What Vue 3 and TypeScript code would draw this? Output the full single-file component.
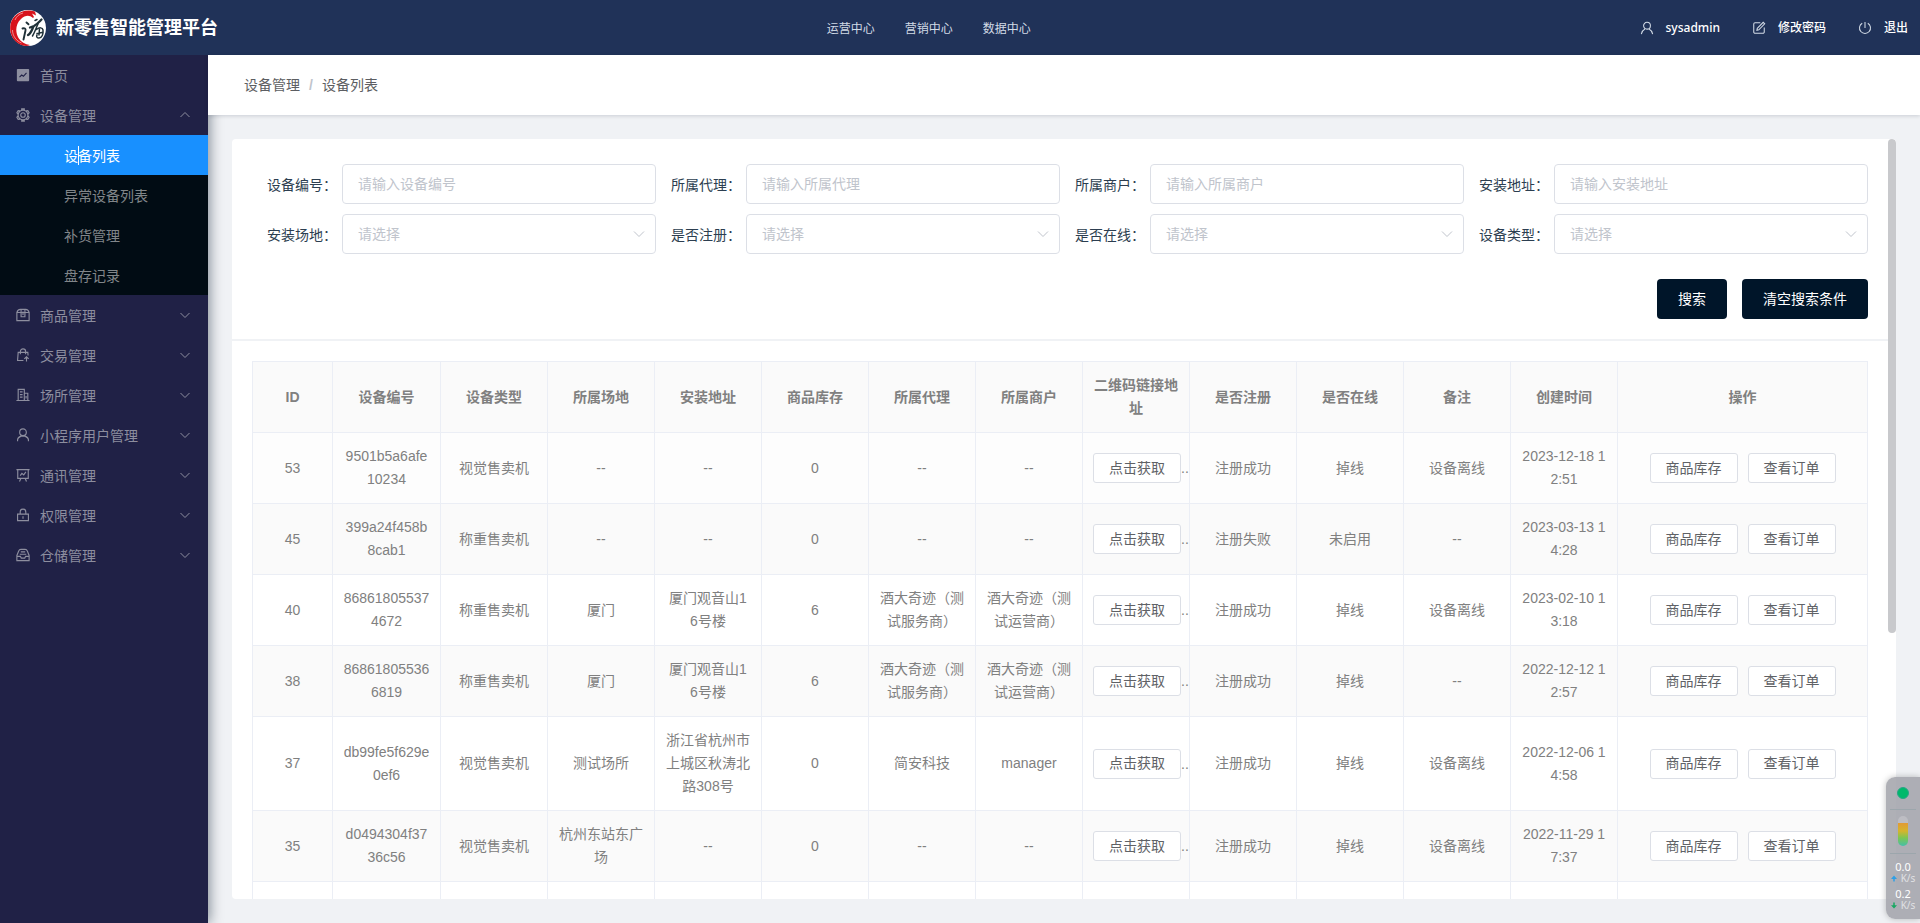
<script setup lang="ts">
import { ref } from 'vue'

interface MenuItem {
  label: string
  icon: string
  children?: string[]
}

interface Field {
  id: string
  label: string
  placeholder: string
  select?: boolean
}

const icons: Record<string, string> = {
  gear: 'M8 2.400a5.600 5.600 0 1 0 0 11.200A5.600 5.600 0 0 0 8 2.400zM8 5.400a2.600 2.600 0 1 0 0 5.200 2.600 2.600 0 0 0 0-5.200zM6.500 2.400V1h3v1.400M6.500 13.600V15h3v-1.400M2.200 7 1 5.500 2.500 3l2 .3M13.800 7 15 5.500 13.500 3l-2 .3M2.200 9 1 10.500 2.500 13l2-.3M13.800 9l1.200 1.500-1.500 2.500-2-.3',
  goods: 'M1 5.200h14v9.300H1zM1 5.200C1.500 3 3 1.500 5 1.500h6c2 0 3.500 1.500 4 3.700M5.800 1.500V10h4.400V1.500M8 4v4',
  sell: 'M8.500 14.300H1.800L2.500 5h11l.3 3.500M5 7V4a3 3 0 0 1 6 0v3M12 15.500V10.500M9.500 12.500 12 10l2.500 2.500',
  building: 'M2.500 14V1.500h7V14M9.500 6h4v8M.5 14.300h15M4.500 4.500h3M4.500 7.500h3M4.500 10.500h3M11.500 9v3',
  user: 'M8 1a3.800 3.800 0 1 0 0 7.600A3.800 3.800 0 0 0 8 1zM1.800 15v-1.500c0-1.700 1.700-3.300 4-4.200h4.400c2.300.9 4 2.500 4 4.200V15',
  board: 'M.5 1.800h15M2 1.800v10h12v-10M5.500 12 4 15.500M10.500 12l1.500 3.500M4.800 8.800l2-2.600 2 1.600 2.500-3.300',
  lock: 'M1.800 7h12.400v7.500H1.800zM4.800 7V4.500a3.200 3.200 0 0 1 6.400 0V7M8 9.500v2.800',
  storage: 'M1 8.500 3.200 3.200C3.600 2 4.300 1.500 5.500 1.500h5c1.200 0 1.900.5 2.300 1.700L15 8.500v6H1zM1 9.500h4l1 2h4l1-2h4M5.500 4.500h5M4.300 7.200h7.400',
  edit: 'M9.500 2H3.500A1.500 1.500 0 0 0 2 3.500v9A1.500 1.500 0 0 0 3.500 14h9a1.500 1.500 0 0 0 1.500-1.500v-5M6 8.500 12.800 1.500l1.700 1.700L7.800 10l-2.200.5z',
  power: 'M8 1v7M4.800 2.500a6.300 6.300 0 1 0 6.400 0',
  person: 'M8 1.500a3.900 3.900 0 1 0 0 7.800 3.900 3.900 0 0 0 0-7.800zM1.500 15c.8-3 2.200-4.800 4.200-5.800M14.500 15c-.8-3-2.200-4.800-4.200-5.800',
}

const menu: MenuItem[] = [
  { label: '首页', icon: 'home' },
  { label: '设备管理', icon: 'gear', children: ['设备列表', '异常设备列表', '补货管理', '盘存记录'] },
  { label: '商品管理', icon: 'goods' },
  { label: '交易管理', icon: 'sell' },
  { label: '场所管理', icon: 'building' },
  { label: '小程序用户管理', icon: 'user' },
  { label: '通讯管理', icon: 'board' },
  { label: '权限管理', icon: 'lock' },
  { label: '仓储管理', icon: 'storage' },
]

const activeChild = ref('设备列表')

const fields: Field[] = [
  { id: 'code', label: '设备编号', placeholder: '请输入设备编号' },
  { id: 'agent', label: '所属代理', placeholder: '请输入所属代理' },
  { id: 'merchant', label: '所属商户', placeholder: '请输入所属商户' },
  { id: 'address', label: '安装地址', placeholder: '请输入安装地址' },
  { id: 'site', label: '安装场地', placeholder: '请选择', select: true },
  { id: 'registered', label: '是否注册', placeholder: '请选择', select: true },
  { id: 'online', label: '是否在线', placeholder: '请选择', select: true },
  { id: 'type', label: '设备类型', placeholder: '请选择', select: true },
]

const form = ref<Record<string, string>>(Object.fromEntries(fields.map((f) => [f.id, ''])))

function clearForm(): void {
  for (const f of fields) form.value[f.id] = ''
}

const columns: string[] = [
  'ID', '设备编号', '设备类型', '所属场地', '安装地址', '商品库存', '所属代理', '所属商户',
  '二维码链接地址', '是否注册', '是否在线', '备注', '创建时间', '操作',
]

/* Cells before the QR-code column, then the cells after it. */
const rows: { before: string[]; after: string[] }[] = [
  { before: ['53', '9501b5a6afe10234', '视觉售卖机', '--', '--', '0', '--', '--'], after: ['注册成功', '掉线', '设备离线', '2023-12-18 12:51'] },
  { before: ['45', '399a24f458b8cab1', '称重售卖机', '--', '--', '0', '--', '--'], after: ['注册失败', '未启用', '--', '2023-03-13 14:28'] },
  { before: ['40', '868618055374672', '称重售卖机', '厦门', '厦门观音山1\n6号楼', '6', '酒大奇迹（测试服务商）', '酒大奇迹（测试运营商）'], after: ['注册成功', '掉线', '设备离线', '2023-02-10 13:18'] },
  { before: ['38', '868618055366819', '称重售卖机', '厦门', '厦门观音山1\n6号楼', '6', '酒大奇迹（测试服务商）', '酒大奇迹（测试运营商）'], after: ['注册成功', '掉线', '--', '2022-12-12 12:57'] },
  { before: ['37', 'db99fe5f629e0ef6', '视觉售卖机', '测试场所', '浙江省杭州市上城区秋涛北路308号', '0', '简安科技', 'manager'], after: ['注册成功', '掉线', '设备离线', '2022-12-06 14:58'] },
  { before: ['35', 'd0494304f3736c56', '视觉售卖机', '杭州东站东广场', '--', '0', '--', '--'], after: ['注册成功', '掉线', '设备离线', '2022-11-29 17:37'] },
]
</script>

<template>
  <div class="app">
    <header class="topbar">
      <div class="brand">
        <svg class="logo" viewBox="0 0 36 36" aria-hidden="true">
          <circle cx="18" cy="18" r="18" fill="#fff" />
          <path d="M25 1.500C14-2 3 4 .6 14-1.500 24 4 33 13 35.500c3 .7 5 .5 7-.5-5-.5-9-3-11.500-7C5 22 5.500 14 11 9c4-3.500 8-4.500 12-1l1-1-2-3.500 4 2z" fill="#d8131c" />
          <path d="M5 10c1-3 4-6 8-7M2.500 20c0 6 4 11 9 13" fill="none" stroke="#fff" stroke-width=".5" />
          <g fill="none" stroke="#1f3138" stroke-linecap="round" stroke-linejoin="round">
            <path d="M16.500 12.500l2 1.800M12.500 18.500c2-.8 3.500 0 3 2l-2 9" stroke-width="1.900" />
            <path d="M18 25c3-1.500 4-5.500 5.500-8.500M20 17.500l4-1.500c3-1.500 5.500-4.500 7.500-6.500" stroke-width="2.300" />
            <path d="M25 10.500l2-1M28 14c-2 4-3 8-5.500 12M26.500 19.500c3-2.500 6-2 6.500.5.500 4-1 8-4 8-2 0-3-1.500-2-3M27 23.500l5-1M29.500 18.500 29 25" stroke-width="1.500" />
          </g>
        </svg>
        <h1>新零售智能管理平台</h1>
      </div>
      <nav class="centers" aria-label="中心">
        <a href="#operate">运营中心</a>
        <a href="#marketing">营销中心</a>
        <a href="#data">数据中心</a>
      </nav>
      <div class="account">
        <a href="#user"><svg viewBox="0 0 16 16"><path :d="icons.person" /></svg><span>sysadmin</span></a>
        <a href="#password"><svg viewBox="0 0 16 16"><path :d="icons.edit" /></svg><span>修改密码</span></a>
        <a href="#logout"><svg viewBox="0 0 16 16"><path :d="icons.power" /></svg><span>退出</span></a>
      </div>
    </header>

    <aside class="sidebar">
      <ul>
        <li v-for="item in menu" :key="item.label">
          <a class="item" :href="'#' + item.icon">
            <svg v-if="item.icon === 'home'" class="icon" viewBox="0 0 16 16">
              <rect x="1" y="1" width="14" height="14" rx="1" class="solid" />
              <path d="M4 10.500l2.500-2.500 2 1.500L12 5.500" class="line" />
            </svg>
            <svg v-else class="icon" viewBox="0 0 16 16"><path :d="icons[item.icon]" /></svg>
            <span class="label">{{ item.label }}</span>
            <svg v-if="item.icon !== 'home'" class="arrow" :class="{ open: item.children }" viewBox="0 0 12 12">
              <path d="M1.500 4 6 8.500 10.500 4" />
            </svg>
          </a>
          <ul v-if="item.children" class="sub">
            <li v-for="child in item.children" :key="child">
              <a :href="'#' + child" :class="{ active: child === activeChild }" @click.prevent="activeChild = child">
                {{ child }}<i v-if="child === activeChild" class="caret"></i>
              </a>
            </li>
          </ul>
        </li>
      </ul>
    </aside>

    <nav class="crumbs" aria-label="面包屑">
      <a href="#device">设备管理</a><b>/</b><span>设备列表</span>
    </nav>

    <main class="main">
      <div class="card">
        <form class="search" @submit.prevent>
          <div class="fields">
            <div v-for="f in fields" :key="f.id" class="field">
              <label :for="f.id">{{ f.label }}：</label>
              <div v-if="f.select" class="control">
                <select :id="f.id" v-model="form[f.id]">
                  <option value="" disabled>{{ f.placeholder }}</option>
                </select>
                <svg class="chevron" viewBox="0 0 12 12"><path d="M1 3.500 6 8.500 11 3.500" /></svg>
              </div>
              <div v-else class="control">
                <input :id="f.id" v-model="form[f.id]" type="text" :placeholder="f.placeholder" />
              </div>
            </div>
          </div>
          <div class="actions">
            <button type="submit">搜索</button>
            <button type="button" @click="clearForm">清空搜索条件</button>
          </div>
        </form>

        <div class="list">
          <table>
            <colgroup>
              <col class="id-col" />
              <col class="code-col" />
              <col v-for="n in 11" :key="n" />
              <col class="op-col" />
            </colgroup>
            <thead>
              <tr><th v-for="c in columns" :key="c" scope="col">{{ c }}</th></tr>
            </thead>
            <tbody>
              <tr v-for="row in rows" :key="row.before[0]">
                <td v-for="(cell, i) in row.before" :key="'b' + i">{{ cell }}</td>
                <td class="qr"><button type="button">点击获取</button>..</td>
                <td v-for="(cell, i) in row.after" :key="'a' + i">{{ cell }}</td>
                <td>
                  <div class="ops">
                    <button type="button">商品库存</button>
                    <button type="button">查看订单</button>
                  </div>
                </td>
              </tr>
              <tr class="pending" aria-hidden="true"><td v-for="c in columns" :key="c"></td></tr>
            </tbody>
          </table>
        </div>
        <div class="thumb"></div>
      </div>
    </main>

    <div class="monitor">
      <span class="dot"></span>
      <hr />
      <span class="gauge"></span>
      <hr />
      <div class="rate">0.0</div>
      <div class="unit up"><svg viewBox="0 0 8 8"><path d="M4 0 8 4.500H5V8H3V4.500H0z" /></svg>K/s</div>
      <div class="rate">0.2</div>
      <div class="unit down"><svg viewBox="0 0 8 8"><path d="M4 8 0 3.500h3V0h2v3.500h3z" /></svg>K/s</div>
    </div>
  </div>
</template>

<style>
body {
  margin: 0;
  overflow: hidden;
}
</style>

<style scoped>
.app {
  position: relative;
  display: grid;
  grid-template: 55px 60px minmax(0, 1fr) / 208px minmax(0, 1fr);
  height: 100vh;
  overflow: hidden;
  background: #f0f2f5;
  color: #2c3e50;
  font: 14px/20px "Liberation Sans", "Noto Sans CJK SC", sans-serif;
}
.app * {
  box-sizing: border-box;
}
a {
  color: inherit;
  text-decoration: none;
}
ul {
  margin: 0;
  padding: 0;
  list-style: none;
}
button,
input,
select {
  font: inherit;
}
svg {
  flex: none;
  fill: none;
  stroke: currentColor;
}

.topbar {
  grid-column: 1 / 3;
  z-index: 2;
  display: flex;
  align-items: center;
  justify-content: space-between;
  padding: 0 12px 0 10px;
  background: #203258;
  color: #fff;
}
.brand {
  display: flex;
  align-items: center;
  gap: 10px;
}
.logo {
  width: 36px;
  height: 36px;
  stroke: none;
}
.brand h1 {
  margin: 0;
  font-size: 18px;
  line-height: 24px;
}
.centers {
  display: flex;
  gap: 30px;
  padding-top: 2px;
  color: #d2dbe6;
  font-size: 12px;
}
.account {
  display: flex;
  gap: 32px;
  font: 500 12px/20px "Noto Sans", "Noto Sans CJK SC", sans-serif;
}
.account a {
  display: flex;
  align-items: center;
  gap: 12px;
}
.account svg {
  width: 14px;
  height: 14px;
  color: #d2dbe6;
  stroke-width: 1.2;
}

.sidebar {
  grid-row: 2 / 4;
  z-index: 1;
  background: #202146;
  color: #8d8e9f;
  box-shadow: 2px 0 12px rgba(0, 21, 41, 0.45);
}
.item {
  display: flex;
  align-items: center;
  height: 40px;
  padding: 0 16px;
}
.icon {
  width: 14px;
  height: 14px;
  stroke-width: 1.3;
}
.icon .solid {
  fill: currentColor;
  stroke: none;
}
.icon .line {
  stroke: #202146;
}
.label {
  flex: 1;
  margin-left: 10px;
  padding-top: 2px;
}
.arrow {
  width: 12px;
  height: 12px;
  margin-right: 1px;
}
.arrow.open {
  transform: rotate(180deg);
}
.sub {
  background: #010c14;
  color: #81868a;
}
.sub a {
  position: relative;
  display: block;
  height: 40px;
  padding-left: 64px;
  line-height: 42px;
}
.sub .active {
  background: #1890ff;
  color: #fff;
}
.caret {
  position: absolute;
  top: 11px;
  left: 78px;
  width: 1px;
  height: 19px;
  background: #fff;
}

.crumbs {
  z-index: 2;
  display: flex;
  align-items: center;
  padding-left: 36px;
  background: #fff;
  color: #5c5e62;
  box-shadow: 0 1px 4px rgba(0, 21, 41, 0.16);
}
.crumbs b {
  margin: 0 9px;
  color: #c0c4cc;
}

.main {
  min-height: 0;
  padding: 24px;
}
.card {
  position: relative;
  height: 100%;
  padding-right: 8px;
  overflow: hidden;
  background: #fff;
  border-radius: 4px;
}
.search {
  padding: 25px 20px 20px;
  border-bottom: 2px solid #f0f2f5;
}
.fields {
  display: grid;
  grid-template-columns: repeat(4, minmax(0, 1fr));
  row-gap: 10px;
}
.field {
  display: flex;
  align-items: center;
}
.field label {
  width: 90px;
  padding: 2px 0 0 15px;
  white-space: nowrap;
}
.control {
  position: relative;
  flex: 1;
  min-width: 0;
}
.control input,
.control select {
  display: block;
  width: 100%;
  height: 40px;
  padding: 0 15px;
  appearance: none;
  background: #fff;
  border: 1px solid #dcdfe6;
  border-radius: 4px;
  color: #c0c4cc;
  outline: none;
}
.control input::placeholder {
  color: #c0c4cc;
}
.chevron {
  position: absolute;
  top: 14px;
  right: 11px;
  width: 12px;
  height: 12px;
  color: #c0c4cc;
  pointer-events: none;
}
.actions {
  display: flex;
  justify-content: flex-end;
  gap: 15px;
  margin-top: 25px;
}
.actions button {
  height: 40px;
  padding: 0 21px;
  background: #001529;
  border: 0;
  border-radius: 4px;
  color: #fff;
}

.list {
  padding: 20px 20px 0;
}
table {
  width: 100%;
  table-layout: fixed;
  border-collapse: separate;
  border-spacing: 0;
  border: solid #ebeef5;
  border-width: 1px 0 0 1px;
  color: #808080;
  line-height: 23px;
  text-align: center;
}
.id-col {
  width: 80px;
}
.code-col {
  width: 108px;
}
.op-col {
  width: 250px;
}
th,
td {
  height: 71px;
  padding: 12px 10px;
  border: solid #ebeef5;
  border-width: 0 1px 1px 0;
  white-space: pre-line;
  word-break: break-all;
}
th,
tbody tr:nth-child(even) {
  background: #fafafa;
}
tbody tr:first-child {
  background: #fdfdfd;
}
td button {
  height: 30px;
  padding: 0 15px;
  background: #fff;
  border: 1px solid #dcdfe6;
  border-radius: 3px;
  color: #606266;
  white-space: nowrap;
}
td.qr {
  padding-right: 0;
  overflow: hidden;
  text-align: left;
  white-space: nowrap;
}
.ops {
  display: flex;
  justify-content: center;
  gap: 10px;
}
.thumb {
  position: absolute;
  top: 0;
  right: 0;
  width: 8px;
  height: 65%;
  background: #c8c9cc;
  border-radius: 4px;
}

.monitor {
  position: absolute;
  right: 0;
  bottom: 4px;
  z-index: 3;
  display: flex;
  flex-direction: column;
  align-items: center;
  width: 34px;
  height: 142px;
  padding-top: 10px;
  background: rgba(160, 161, 168, 0.84);
  border-radius: 9px 0 0 9px;
  box-shadow: 0 0 6px rgba(0, 0, 0, 0.25);
  color: #fff;
  font: 11px/14px "Noto Sans", sans-serif;
}
.monitor hr {
  width: 26px;
  margin: 10px 0 6px;
  border: 0;
  border-top: 1px solid #9ca6ac;
}
.dot {
  width: 12px;
  height: 12px;
  background: #00b96b;
  border: 1px solid #2aa587;
  border-radius: 50%;
}
.gauge {
  width: 10px;
  height: 30px;
  background: linear-gradient(#bdbdc3 7px, #e29a35 7px, #d5b52c 15px, #7cc653 22px, #45bfa9);
  border-radius: 5px;
}
.gauge + hr {
  margin: 7px 0 6px;
}
.unit {
  display: flex;
  align-items: center;
  gap: 4px;
  height: 8px;
  margin-bottom: 5px;
  color: #e0e1e4;
  font-size: 10px;
}
.unit svg {
  width: 6px;
  height: 7px;
  fill: currentColor;
  stroke: none;
}
.up svg {
  color: #2e9fe6;
}
.down svg {
  color: #18a862;
}
</style>
